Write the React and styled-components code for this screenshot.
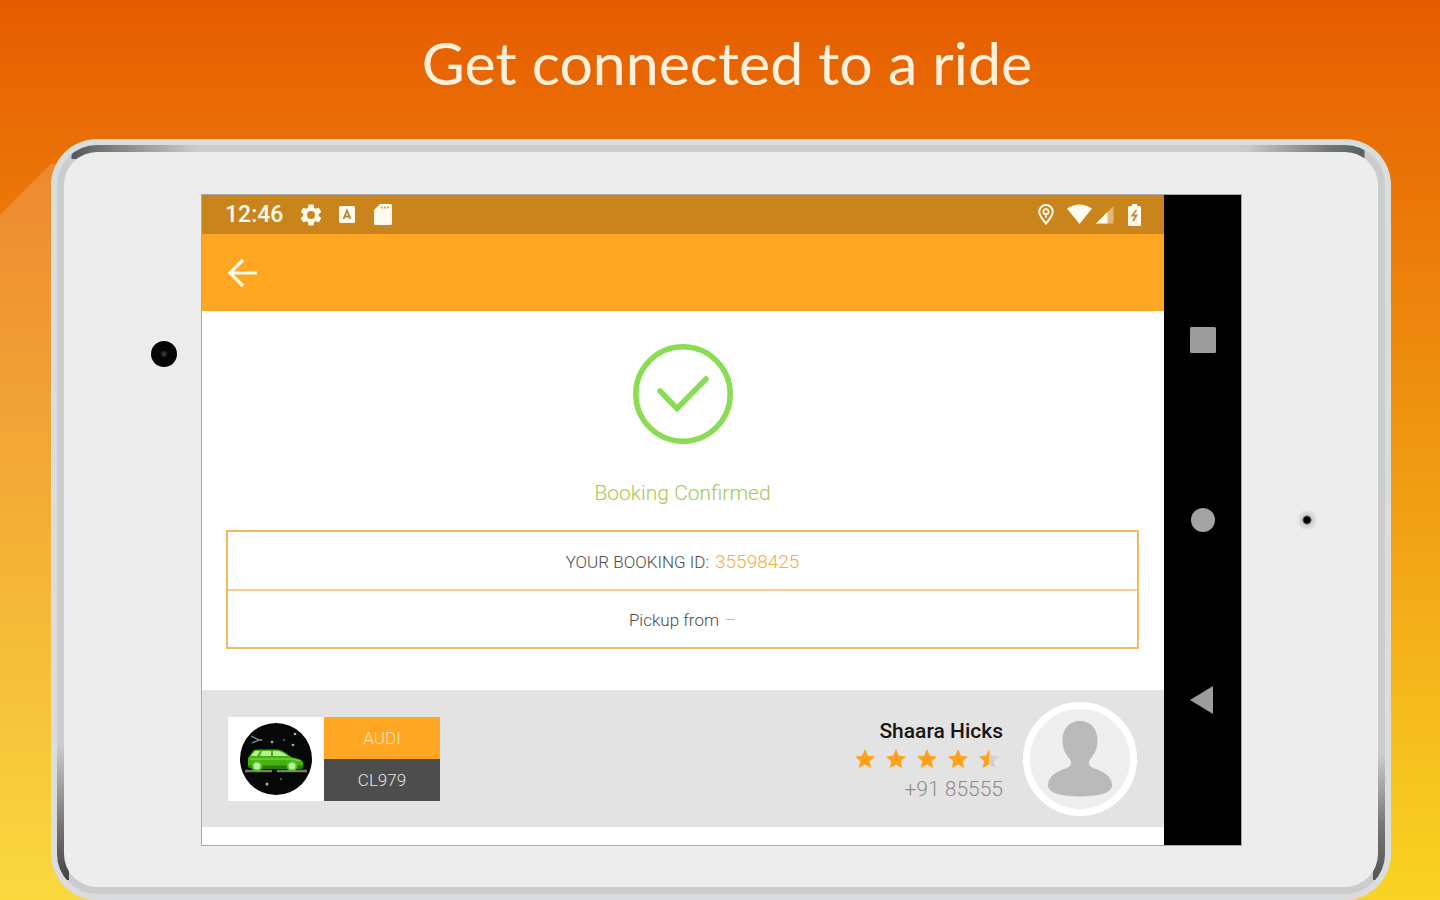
import React from "react";
import styled, { createGlobalStyle } from "styled-components";

const GlobalStyle = createGlobalStyle`
  *, *::before, *::after { box-sizing: border-box; }
  body { margin: 0; font-family: Roboto, "Liberation Sans", sans-serif; }
  h1, h2, p { margin: 0; font-weight: inherit; }
  button { border: 0; padding: 0; background: none; cursor: pointer; }
  svg { display: block; }
`;

const Page = styled.div`
  position: relative;
  min-height: 100vh;
  padding: 0 49px 0 51px;
  overflow: hidden;
  background: linear-gradient(#e65c00, #f9d423);
`;

const Glow = styled.div`
  position: absolute;
  top: 164px;
  bottom: 0;
  left: 0;
  width: 100px;
  background: linear-gradient(rgba(255, 255, 255, 0.17), rgba(255, 255, 255, 0.12));
  clip-path: polygon(0 51px, 51px 0, 100% 0, 100% 100%, 0 100%);
`;

const Headline = styled.h1`
  padding: 24px 0 37px 12px;
  color: #fff1dc;
  font: 400 59px/78px Lato, sans-serif;
  text-align: center;
`;

const Device = styled.div`
  position: relative;
  padding: 6px;
  border-radius: 46px;
  background: linear-gradient(#d9dddc, #dbdcde);
`;

const Rim = styled.div`
  padding: 7px;
  border-radius: 40px;
  background:
    linear-gradient(90deg, transparent 14px, #55585a 15px, #77797a 50px, transparent 140px) 0 0 / 50% 14px no-repeat,
    linear-gradient(270deg, transparent 20px, #55605f 21px, #77797a 60px, transparent 140px) 100% 0 / 50% 14px no-repeat,
    linear-gradient(0deg, transparent 14px, #444 15px, #777 70px, transparent 150px) 0 100% / 12px 50% no-repeat,
    linear-gradient(0deg, transparent 14px, #555 15px, #777 70px, transparent 140px) 100% 100% / 12px 50% no-repeat,
    #cacccd;
`;

const Face = styled.div`
  display: grid;
  grid-template-columns: 137px minmax(0, 1fr) 136px;
  padding: 42px 0 41px;
  border-radius: 33px;
  background: #ededed;
`;

const Bezel = styled.div`
  display: flex;
  justify-content: center;
`;

const CameraBezel = styled(Bezel)`
  justify-content: flex-end;
  padding: 147px 24px 0 0;
`;

const SensorBezel = styled(Bezel)`
  align-items: center;
  padding-right: 6px;
`;

const Camera = styled.span`
  width: 26px;
  height: 26px;
  border-radius: 50%;
  background: radial-gradient(circle, #4a4a4a 0, #050505 4px);
`;

const Sensor = styled.span`
  width: 22px;
  height: 22px;
  border-radius: 50%;
  background: radial-gradient(circle, #000 3px, #cfcfcf 5px, #dedede 8px, #ededed 11px);
`;

const Screen = styled.div`
  display: grid;
  grid-template-columns: minmax(0, 1fr) 77px;
  border: 1px solid #a9a9a9;
  background: #fff;
`;

const StatusBar = styled.div`
  display: flex;
  align-items: center;
  justify-content: space-between;
  height: 39px;
  padding: 0 23px;
  background: #ca841c;
  color: #fffaee;
`;

const StatusGroup = styled.div`
  display: flex;
  align-items: center;
  gap: ${(p) => p.$gap}px;
`;

const Clock = styled.time`
  font-size: 23px;
  line-height: 28px;
  font-weight: 500;
`;

const AppBar = styled.header`
  display: flex;
  align-items: center;
  height: 77px;
  padding-left: 24px;
  background: #ffa622;
`;

const Confirmation = styled.section`
  display: flex;
  flex-direction: column;
  align-items: center;
  padding: 33px 25px 41px 24px;
`;

const ConfirmTitle = styled.h2`
  margin: 34px 0 22px;
  color: #a5c853;
  font-size: 21px;
  line-height: 30px;
  font-weight: 300;
`;

const Details = styled.div`
  align-self: stretch;
  border: 2px solid #f3b863;
`;

const DetailRow = styled.p`
  display: flex;
  align-items: center;
  justify-content: center;
  gap: 6px;
  height: 57px;
  padding-top: 2px;
  color: #4c4c4c;
  font-size: 17px;
  line-height: 24px;
  font-weight: 300;
  & + & {
    height: 58px;
    border-top: 2px solid #f8cd92;
  }
`;

const Accent = styled.span`
  color: #f2ab3c;
  font-size: ${(p) => (p.$large ? 19 : 17)}px;
`;

const DriverBar = styled.section`
  display: flex;
  align-items: center;
  justify-content: space-between;
  height: 137px;
  margin-bottom: 18px;
  padding: 0 27px 0 26px;
  background: #e3e3e3;
`;

const Vehicle = styled.div`
  display: flex;
`;

const VehiclePhoto = styled.div`
  display: grid;
  place-items: center;
  width: 96px;
  height: 84px;
  background: #fff;
`;

const Plate = styled.div`
  display: grid;
  grid-template-rows: 1fr 1fr;
  width: 116px;
`;

const PlateLine = styled.span`
  display: flex;
  align-items: center;
  justify-content: center;
  background: ${(p) => (p.$dark ? "#4d4d4d" : "#ffa622")};
  color: ${(p) => (p.$dark ? "#e6e6e6" : "#ffe3b4")};
  font-size: 17px;
  line-height: 24px;
  font-weight: 300;
`;

const Driver = styled.div`
  display: flex;
  align-items: center;
  gap: 20px;
`;

const DriverInfo = styled.div`
  display: flex;
  flex-direction: column;
  align-items: flex-end;
  padding-top: 4px;
`;

const DriverName = styled.span`
  color: #161616;
  font-size: 21px;
  line-height: 30px;
  font-weight: 500;
`;

const Stars = styled.div`
  display: flex;
  gap: 11px;
  height: 26px;
  align-items: center;
  padding-right: 4px;
`;

const Phone = styled.a`
  color: #8c8c8c;
  font-size: 21px;
  line-height: 34px;
  font-weight: 300;
  text-decoration: none;
`;

const Avatar = styled.div`
  overflow: hidden;
  width: 114px;
  height: 114px;
  border: 7px solid #fff;
  border-radius: 50%;
  background: #eee;
`;

const SystemNav = styled.nav`
  display: flex;
  flex-direction: column;
  align-items: center;
  justify-content: space-between;
  padding: 126px 0;
  background: #000;
`;

const NavButton = styled.button`
  display: grid;
  place-items: center;
  width: 38px;
  height: 38px;
`;

const STAR = "M10 0l2.9 6.7 7.1.7-5.300 4.800L16.200 19 10 15.400 3.800 19l1.500-6.800L0 7.400l7.100-.7z";

function Star({ half }) {
  return (
    <svg width="20" height="19" viewBox="0 0 20 19" aria-hidden="true">
      <path d={STAR} fill={half ? "#d3d0cc" : "#ffa11c"} />
      {half && <path d="M10 0v15.400L3.800 19l1.500-6.800L0 7.400l7.100-.7z" fill="#ffa11c" />}
    </svg>
  );
}

function SettingsIcon() {
  return (
    <svg width="26" height="26" viewBox="0 0 24 24" fill="currentColor" aria-hidden="true">
      <path d="M19.140 12.940c.04-.3.060-.61.060-.94 0-.32-.02-.64-.07-.94l2.030-1.580c.18-.14.230-.41.120-.61l-1.920-3.320c-.12-.22-.37-.29-.59-.22l-2.390.96c-.5-.38-1.030-.7-1.620-.94l-.36-2.540c-.04-.24-.24-.41-.48-.41h-3.840c-.24 0-.43.170-.47.410l-.36 2.540c-.59.240-1.130.570-1.620.940l-2.390-.96c-.22-.08-.47 0-.59.220L2.740 8.870c-.12.210-.08.470.12.610l2.030 1.580c-.05.300-.09.630-.09.940s.02.640.07.940l-2.030 1.580c-.18.140-.23.410-.12.610l1.920 3.320c.12.220.370.290.590.220l2.390-.96c.500.380 1.030.700 1.620.940l.36 2.540c.05.240.240.410.480.410h3.840c.24 0 .44-.17.470-.41l.36-2.540c.59-.24 1.130-.56 1.620-.94l2.390.96c.22.080.470 0 .590-.22l1.920-3.320c.12-.22.070-.47-.12-.61zM12 15.600A3.600 3.600 0 1 1 12 8.400a3.600 3.600 0 0 1 0 7.200z" />
    </svg>
  );
}

function LetterIcon() {
  return (
    <svg width="16" height="17" viewBox="0 0 16 17" aria-hidden="true">
      <rect width="16" height="17" rx="1.500" fill="currentColor" />
      <path d="M4.500 13L8 4.500l3.500 8.500M6 10.500h4" fill="none" stroke="#b98535" strokeWidth="1.800" />
    </svg>
  );
}

function CardIcon() {
  return (
    <svg width="22" height="21" viewBox="-4 0 22 21" aria-hidden="true">
      <path d="M6 0h10.500Q18 0 18 1.500v18q0 1.500-1.500 1.500h-15Q0 21 0 19.500V6z" fill="currentColor" />
      <path d="M7 3.500h8" stroke="#d7a75c" strokeWidth="2" strokeDasharray="2 1" />
    </svg>
  );
}

function PinIcon() {
  return (
    <svg width="16" height="21" viewBox="0 0 16 21" fill="none" stroke="currentColor" aria-hidden="true">
      <path d="M8 19.500C5 16 1.200 11.500 1.200 7.800a6.800 6.800 0 0 1 13.600 0C14.800 11.500 11 16 8 19.500z" strokeWidth="2" />
      <circle cx="8" cy="7.800" r="2.600" strokeWidth="1.800" />
      <path d="M8 9v5" strokeWidth="1.500" />
    </svg>
  );
}

function SignalIcons() {
  return (
    <svg width="48" height="21" viewBox="0 0 48 21" aria-hidden="true">
      <path d="M0 4.500Q12.500 -3.500 25 4.500L12.500 20z" fill="currentColor" />
      <path d="M29 19.500h17.500V2z" fill="#dfb87a" />
      <path d="M29 19.500h11.500V8z" fill="currentColor" />
    </svg>
  );
}

function BatteryIcon() {
  return (
    <svg width="13" height="22" viewBox="0 0 13 22" aria-hidden="true">
      <path d="M4 0h5v2h2.500Q13 2 13 3.500v17q0 1.500-1.500 1.500h-10Q0 22 0 20.500v-17Q0 2 1.500 2H4z" fill="currentColor" />
      <path d="M8.500 6L4.300 11.500h4.200L5 17" fill="none" stroke="#c18c3d" strokeWidth="1.800" />
    </svg>
  );
}

function BackArrow() {
  return (
    <svg width="32" height="30" viewBox="0 0 32 30" fill="none" stroke="#fffbe9" strokeWidth="3.200" aria-hidden="true">
      <path d="M31 15H4M17 2L4 15l13 13" />
    </svg>
  );
}

function CheckCircle() {
  return (
    <svg width="100" height="100" viewBox="0 0 100 100" fill="none" stroke="#8bdc55" role="img" aria-label="Confirmed">
      <circle cx="50" cy="50" r="47.200" strokeWidth="5.500" />
      <path d="M27 47l17 17.500L73 35" strokeWidth="5.500" strokeLinecap="round" />
    </svg>
  );
}

function CarIcon() {
  return (
    <svg width="72" height="72" viewBox="0 0 72 72" role="img" aria-label="Green car">
      <circle cx="36" cy="36" r="36" fill="#070908" />
      <path d="M11 13l8 4-7 3M19 17h3" fill="none" stroke="#8f9492" strokeWidth="1.300" />
      <g fill="#a7b0aa">
        <circle cx="32" cy="19" r="1.300" />
        <circle cx="55" cy="11" r="1.300" />
        <circle cx="53" cy="22" r="1.300" />
        <circle cx="44" cy="17" r=".8" />
        <circle cx="27" cy="61" r="1.500" />
        <circle cx="41" cy="56" r=".8" />
      </g>
      <path d="M5 48h27M37 48h30" stroke="#747b78" strokeWidth="2.500" />
      <path d="M8 44V35l5-7q1-1.500 4-1.500h20q4 0 8 3l7 5q8 1 10 3.500 2 2 1 7L59 46H13z" fill="#42b30f" />
      <path d="M8 42.500h55V45l-4 1H13l-5-2z" fill="#287d08" />
      <path d="M11 33l4-5h5l-3 5zM20 33l2-5h9v5zM33 33v-5h4q4 0 11 5z" fill="#b9ee9b" />
      <path d="M10 36h42l8 2" fill="none" stroke="#6fd436" strokeWidth="1.500" />
      <g fill="#b9ee9b" stroke="#54bd28" strokeWidth="2">
        <circle cx="17" cy="43" r="4.500" />
        <circle cx="52" cy="43" r="4.500" />
      </g>
    </svg>
  );
}

function PersonIcon() {
  return (
    <svg width="100" height="100" viewBox="0 0 100 100" fill="#bababa" role="img" aria-label="Driver photo">
      <path d="M50 12c-11 0-17.500 8-17.500 19 0 9 3 14 6.500 18 3 4 3 7-1 9.500C27 62 18 67 18 76c0 8 13 11.500 32 11.500S82 84 82 76c0-9-9-14-20-17.500-4-2.500-4-5.500-1-9.500 3.500-4 6.500-9 6.500-18C67.500 20 61 12 50 12z" />
    </svg>
  );
}

export default function App() {
  return (
    <>
      <GlobalStyle />
      <Page>
        <Glow />
        <Headline>Get connected to a ride</Headline>
        <Device>
          <Rim>
            <Face>
              <CameraBezel>
                <Camera />
              </CameraBezel>
              <Screen>
                <main>
                  <StatusBar>
                    <StatusGroup $gap={15}>
                      <Clock>12:46</Clock>
                      <SettingsIcon />
                      <LetterIcon />
                      <CardIcon />
                    </StatusGroup>
                    <StatusGroup $gap={13}>
                      <PinIcon />
                      <SignalIcons />
                      <BatteryIcon />
                    </StatusGroup>
                  </StatusBar>
                  <AppBar>
                    <button type="button" aria-label="Back">
                      <BackArrow />
                    </button>
                  </AppBar>
                  <Confirmation>
                    <CheckCircle />
                    <ConfirmTitle>Booking Confirmed</ConfirmTitle>
                    <Details>
                      <DetailRow>
                        <span>YOUR BOOKING ID:</span>
                        <Accent $large>35598425</Accent>
                      </DetailRow>
                      <DetailRow>
                        <span>Pickup from</span>
                        <Accent>–</Accent>
                      </DetailRow>
                    </Details>
                  </Confirmation>
                  <DriverBar>
                    <Vehicle>
                      <VehiclePhoto>
                        <CarIcon />
                      </VehiclePhoto>
                      <Plate>
                        <PlateLine>AUDI</PlateLine>
                        <PlateLine $dark>CL979</PlateLine>
                      </Plate>
                    </Vehicle>
                    <Driver>
                      <DriverInfo>
                        <DriverName>Shaara Hicks</DriverName>
                        <Stars role="img" aria-label="4.5 out of 5 stars">
                          <Star />
                          <Star />
                          <Star />
                          <Star />
                          <Star half />
                        </Stars>
                        <Phone href="tel:+9185555">+91 85555</Phone>
                      </DriverInfo>
                      <Avatar>
                        <PersonIcon />
                      </Avatar>
                    </Driver>
                  </DriverBar>
                </main>
                <SystemNav aria-label="System">
                  <NavButton type="button" aria-label="Recent apps">
                    <svg width="26" height="26" viewBox="0 0 26 26" fill="#9c9c9c" aria-hidden="true">
                      <rect width="26" height="26" rx="1.500" />
                    </svg>
                  </NavButton>
                  <NavButton type="button" aria-label="Home">
                    <svg width="24" height="24" viewBox="0 0 24 24" fill="#a3a3a3" aria-hidden="true">
                      <circle cx="12" cy="12" r="12" />
                    </svg>
                  </NavButton>
                  <NavButton type="button" aria-label="Back">
                    <svg width="26" height="28" viewBox="0 0 26 28" fill="#9c9c9c" aria-hidden="true">
                      <path d="M0 14L23 0v28z" />
                    </svg>
                  </NavButton>
                </SystemNav>
              </Screen>
              <SensorBezel>
                <Sensor />
              </SensorBezel>
            </Face>
          </Rim>
        </Device>
      </Page>
    </>
  );
}
